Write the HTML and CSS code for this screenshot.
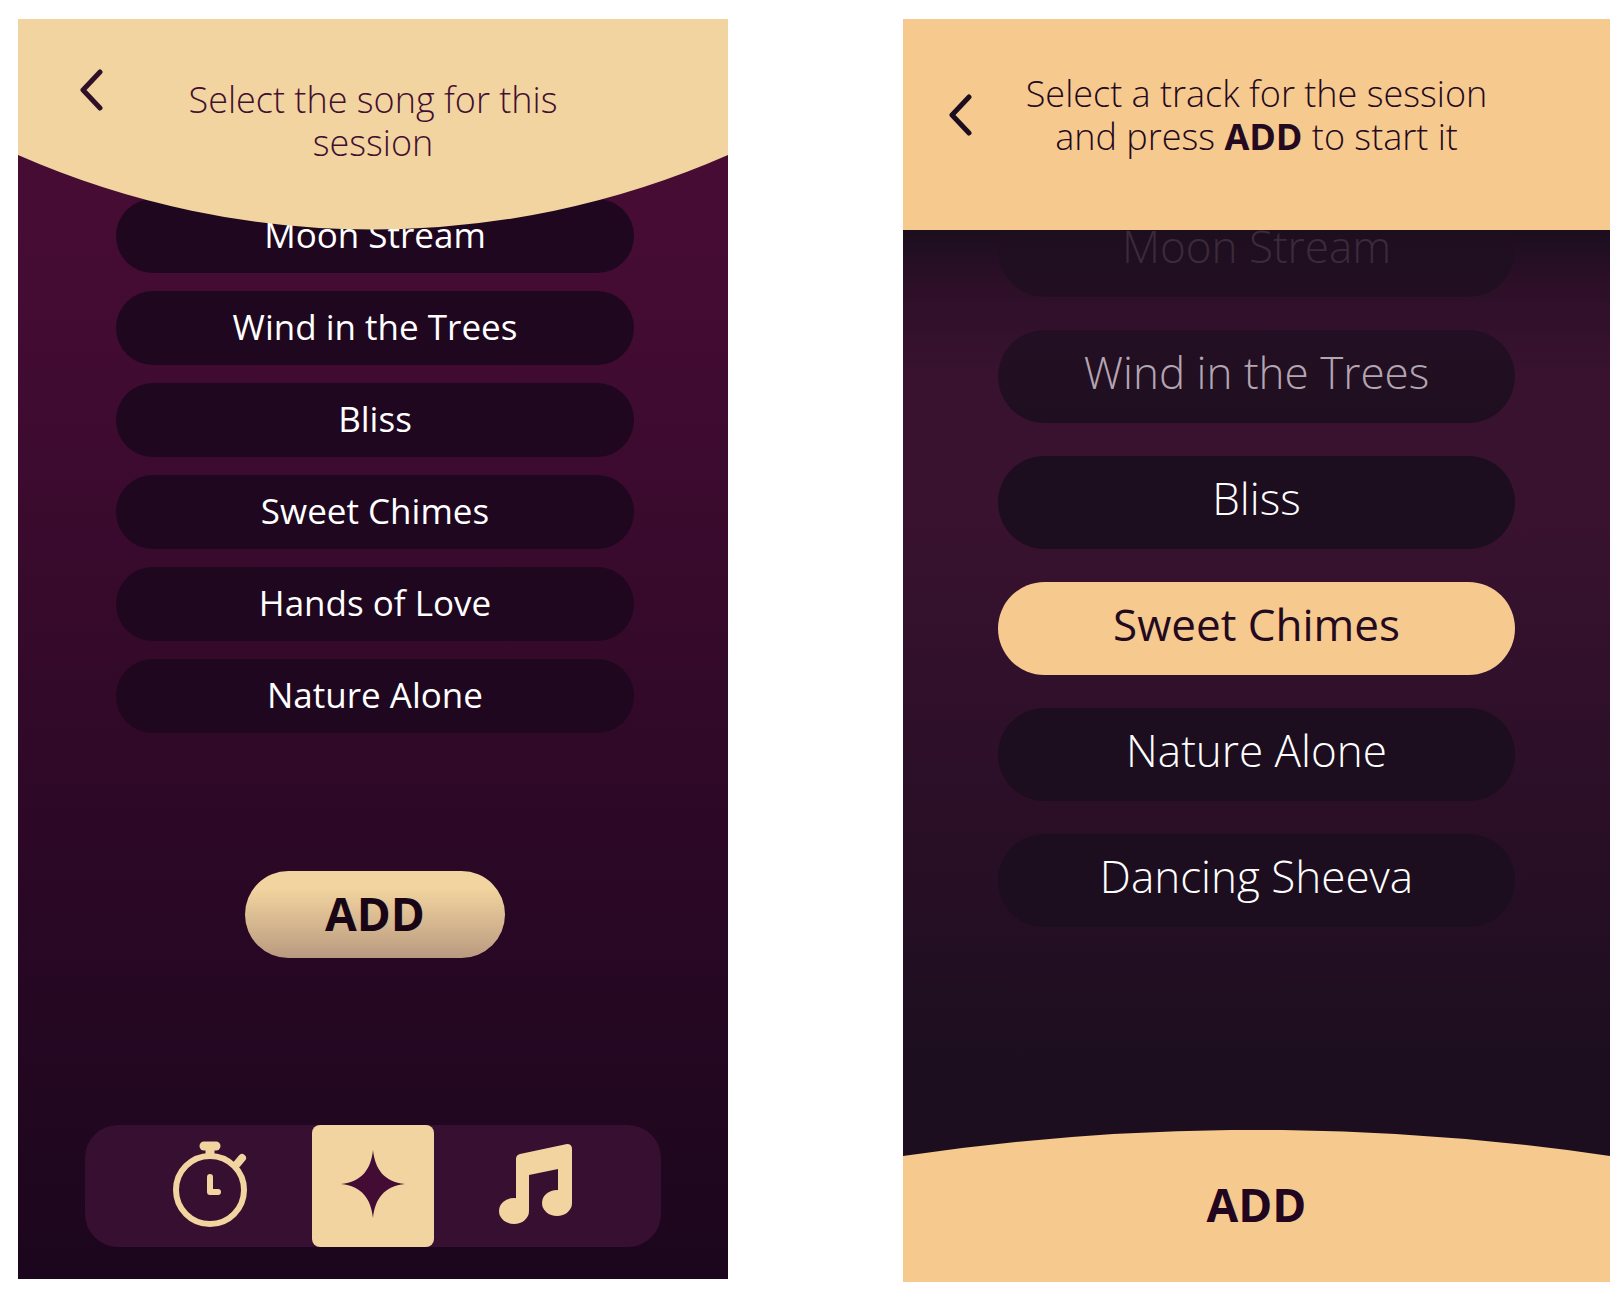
FILE: index.html
```html
<!DOCTYPE html>
<html lang="en">
<head>
<meta charset="utf-8">
<meta name="viewport" content="width=device-width, initial-scale=1">
<title>Session music</title>
<link rel="stylesheet" href="styles.css">
</head>
<body>
<main class="screens">
  <section class="screen screen-song">
    <header class="top top-curved">
      <svg class="curve" viewBox="0 0 710 211" preserveAspectRatio="none" aria-hidden="true"><path d="M0 0H710V136A883 883 0 0 1 0 136Z" fill="#f2d4a0"/></svg>
      <button class="back" type="button" aria-label="Back"><svg width="24" height="42" viewBox="0 0 24 42" aria-hidden="true"><path d="M21 3L4 21L21 39"/></svg></button>
      <h1 class="prompt">Select the song for this session</h1>
    </header>
    <div class="list">
      <button class="track" type="button">Moon Stream</button>
      <button class="track" type="button">Wind in the Trees</button>
      <button class="track" type="button">Bliss</button>
      <button class="track" type="button">Sweet Chimes</button>
      <button class="track" type="button">Hands of Love</button>
      <button class="track" type="button">Nature Alone</button>
    </div>
    <button class="add-pill" type="button">ADD</button>
    <nav class="tabs">
      <button class="tab tab-first" type="button" aria-label="Timer">
        <svg width="76" height="88" viewBox="0 0 76 88" aria-hidden="true"><g fill="none" stroke="#f2d4a0" stroke-linecap="round" stroke-linejoin="round"><circle cx="38" cy="50" r="34" stroke-width="6"/><path d="M32 6H44" stroke-width="9"/><path d="M38 8V15" stroke-width="9" stroke-linecap="butt"/><path d="M65 24L70 18" stroke-width="8"/><path d="M38 37V52H46" stroke-width="6"/></g></svg>
      </button>
      <button class="tab tab-on" type="button" aria-label="Sounds">
        <svg width="66" height="70" viewBox="0 0 66 70" aria-hidden="true"><path d="M33 1C35 20 44 33 65 35C44 37 35 50 33 69C31 50 22 37 1 35C22 33 31 20 33 1Z" fill="#430c35"/></svg>
      </button>
      <button class="tab tab-last" type="button" aria-label="Music">
        <svg width="74" height="80" viewBox="0 0 74 80" aria-hidden="true"><g fill="#f2d4a0"><ellipse cx="15" cy="67" rx="15" ry="13"/><ellipse cx="58" cy="59" rx="15" ry="13"/><path d="M17 67V15Q17 11 21 10L68 0Q73 0 73 5V59H59V25L30 31V67Z"/></g></svg>
      </button>
    </nav>
  </section>

  <section class="screen screen-track">
    <header class="top top-flat">
      <button class="back" type="button" aria-label="Back"><svg width="24" height="42" viewBox="0 0 24 42" aria-hidden="true"><path d="M21 3L4 21L21 39"/></svg></button>
      <h1 class="prompt">Select a track for the session and press <strong>ADD</strong> to start it</h1>
    </header>
    <div class="list">
      <button class="track track-gone" type="button">Moon Stream</button>
      <button class="track track-fading" type="button">Wind in the Trees</button>
      <button class="track" type="button">Bliss</button>
      <button class="track track-on" type="button" aria-pressed="true">Sweet Chimes</button>
      <button class="track" type="button">Nature Alone</button>
      <button class="track" type="button">Dancing Sheeva</button>
    </div>
    <button class="add-bar" type="button">
      <svg class="curve" viewBox="0 0 707 152" preserveAspectRatio="none" aria-hidden="true"><path d="M0 152V26A2416 2416 0 0 1 707 26V152Z" fill="#f6c98e"/></svg>
      <span class="add-text">ADD</span>
    </button>
  </section>
</main>
</body>
</html>
```
FILE: styles.css
```css
* { box-sizing: border-box; }

body {
  margin: 0;
  background: #fff;
  font-family: "Open Sans", "Noto Sans", sans-serif;
}

button {
  margin: 0;
  padding: 0;
  border: 0;
  background: none;
  color: inherit;
  font: inherit;
  cursor: pointer;
}

.screens {
  display: grid;
  grid-template-columns: 710fr 707fr;
  align-items: start;
  gap: 175px;
  padding: 19px 14px 16px 18px;
}

.screen {
  display: flex;
  flex-direction: column;
  align-items: center;
  overflow: hidden;
}

.screen-song {
  padding-bottom: 32px;
  background: linear-gradient(#4a0c35 0%, #450c33 20%, #2c0826 65%, #1b061d 100%);
}

.screen-track {
  background: linear-gradient(#1c0e1f 17%, #2d0f28 21%, #38122f 28%, #38122f 40%, #2c0f28 60%, #1d0e1f 82%);
}

/* Headers sit above the scrolled list */
.top {
  position: relative;
  z-index: 1;
  display: flex;
  justify-content: center;
  width: 100%;
  height: 211px;
}

.top-curved { color: #430f30; padding-top: 59px; }
.top-flat { color: #240a20; padding-top: 53px; background: #f6c98e; }

.curve {
  position: absolute;
  inset: 0;
  width: 100%;
  height: 100%;
}

.back {
  position: absolute;
  top: 50px;
  left: 61px;
  width: 24px;
  height: 42px;
  color: #301028;
}

.top-flat .back { top: 75px; left: 45px; color: #1c0e1f; }

.back svg {
  display: block;
  fill: none;
  stroke: currentColor;
  stroke-width: 5;
  stroke-linecap: round;
  stroke-linejoin: round;
}

.prompt {
  position: relative;
  width: 480px;
  margin: 0;
  font-size: 36px;
  font-weight: 300;
  line-height: 43px;
  text-align: center;
}

.top-curved .prompt { width: 420px; }
.prompt strong { font-weight: 700; }

.list {
  display: flex;
  flex-direction: column;
  width: 73%;
}

.screen-song .list { gap: 18px; margin-top: -31px; }
.screen-track .list { gap: 33px; margin-top: -26px; }

.screen-song .list,
.add-pill { margin-left: 4px; }

.track {
  height: 74px;
  padding-bottom: 4px;
  border-radius: 48px;
  background: #1f0720;
  color: #fff;
  font-size: 35px;
}

.screen-track .track {
  height: 93px;
  padding-bottom: 10px;
  background: #1c0e1f;
  font-size: 44px;
  font-weight: 300;
}

.screen-track .track-gone { background: linear-gradient(#1c0e1f, #210f21); color: #3b2a3a; }
.screen-track .track-fading { background: linear-gradient(#230f23, #1f0e20); color: #b3a5b1; }
.screen-track .track-on { background: #f6c98e; color: #240a1e; font-weight: 500; }

.add-pill {
  width: 260px;
  height: 87px;
  margin-top: 138px;
  padding-bottom: 4px;
  border-radius: 44px;
  background: linear-gradient(#f2d4a0 20%, #b99a80);
  color: #180616;
  font-size: 46px;
  font-weight: 700;
}

.tabs {
  display: grid;
  grid-template-columns: 226fr 121fr 226fr;
  width: 81%;
  height: 122px;
  margin-top: 167px;
  border-radius: 33px;
  background: #370f30;
}

.tab {
  display: flex;
  align-items: center;
  justify-content: center;
  padding-bottom: 4px;
}

.tab-first { padding-left: 22px; }
.tab-last { padding-right: 22px; }
.tab-on { border-radius: 8px; background: #f2d4a0; }

.add-bar {
  position: relative;
  width: 100%;
  height: 152px;
  margin-top: 203px;
  padding-bottom: 4px;
  color: #22051f;
  font-size: 46px;
  font-weight: 700;
}

.add-text { position: relative; }
```
